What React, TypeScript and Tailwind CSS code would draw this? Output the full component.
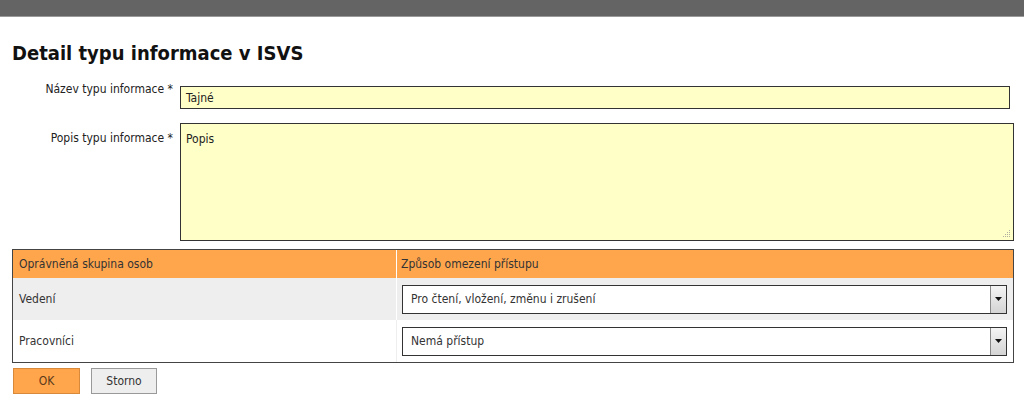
import React from "react";

const font = { fontFamily: '"DejaVu Sans Condensed", "DejaVu Sans", Verdana, sans-serif' };

function FakeSelect({ value }: { value: string }) {
  return (
    <div className="flex h-[29px] w-[605px] border border-[#333] bg-white">
      <div className="flex flex-1 items-center pl-[8px] text-[12px] text-[#333]">{value}</div>
      <div className="flex w-[16px] items-center justify-center border-l border-[#888] bg-gradient-to-b from-[#f4f4f4] to-[#d4d4d4]">
        <svg width="7" height="4" viewBox="0 0 7 4">
          <path d="M0 0 L7 0 L3.5 4 Z" fill="#111" />
        </svg>
      </div>
    </div>
  );
}

export default function App() {
  return (
    <div className="h-[404px] w-[1024px] overflow-hidden bg-white" style={font}>
      <div className="h-[17px] border-b border-[#9a9a9a] bg-[#646464]" />
      <h1 className="mt-[24px] pl-[12px] text-[20px] font-bold leading-[24px] text-[#111]">
        Detail typu informace v ISVS
      </h1>
      <div className="mt-[17px] flex">
        <div className="w-[173px] text-right text-[12px] leading-[14px] text-[#222]">
          Název typu informace *
        </div>
        <div className="ml-[7px] mt-[4px] flex h-[23px] w-[830px] items-center border border-[#333] bg-[#ffffc8] pl-[5px] text-[12px] text-[#222]">
          Tajné
        </div>
      </div>
      <div className="mt-[14px] flex">
        <div className="w-[173px] pt-[8px] text-right text-[12px] leading-[14px] text-[#222]">
          Popis typu informace *
        </div>
        <div className="relative ml-[7px] h-[118px] w-[834px] border border-[#333] bg-[#ffffc8] pl-[5px] pt-[8px] text-[12px] leading-[14px] text-[#222]">
          Popis
          <svg className="absolute bottom-[2px] right-[2px]" width="8" height="8" viewBox="0 0 8 8">
            <g fill="#b0b0a0">
              <rect x="6" y="0" width="1" height="1" />
              <rect x="4" y="2" width="1" height="1" />
              <rect x="6" y="2" width="1" height="1" />
              <rect x="2" y="4" width="1" height="1" />
              <rect x="4" y="4" width="1" height="1" />
              <rect x="6" y="4" width="1" height="1" />
              <rect x="0" y="6" width="1" height="1" />
              <rect x="2" y="6" width="1" height="1" />
              <rect x="4" y="6" width="1" height="1" />
              <rect x="6" y="6" width="1" height="1" />
            </g>
          </svg>
        </div>
      </div>
      <div className="ml-[12px] mt-[8px] w-[1002px] border border-[#444] text-[12px] text-[#333]">
        <div className="flex h-[28px] bg-[#ffa64d]">
          <div className="flex w-[384px] items-center border-r border-white pl-[6px]">Oprávněná skupina osob</div>
          <div className="flex flex-1 items-center pl-[4px]">Způsob omezení přístupu</div>
        </div>
        <div className="flex h-[42px] bg-[#eeeeee]">
          <div className="flex w-[384px] items-center border-r border-white pl-[6px]">Vedení</div>
          <div className="flex flex-1 items-center pl-[5px]">
            <FakeSelect value="Pro čtení, vložení, změnu i zrušení" />
          </div>
        </div>
        <div className="flex h-[42px] bg-white">
          <div className="flex w-[384px] items-center border-r border-[#eee] pl-[6px]">Pracovníci</div>
          <div className="flex flex-1 items-center pl-[5px]">
            <FakeSelect value="Nemá přístup" />
          </div>
        </div>
      </div>
      <div className="ml-[13px] mt-[5px] flex gap-[11px] text-[12px]">
        <div className="flex h-[26px] w-[67px] items-center justify-center border border-[#d9893a] bg-[#ffa64d] text-[#5a3a1a]">
          OK
        </div>
        <div className="flex h-[26px] w-[66px] items-center justify-center border border-[#999] bg-[#eeeeee] text-[#333]">
          Storno
        </div>
      </div>
    </div>
  );
}
